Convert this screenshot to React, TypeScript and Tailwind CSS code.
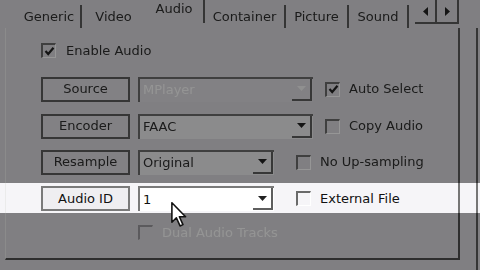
import React from 'react';

const tabs = [
  { label: 'Generic', cls: 'w-[64px] border-r-2 border-[#5a5a5a]' },
  { label: 'Video', cls: 'w-[63px]' },
  { label: 'Audio', cls: 'w-[60px] border-r-2 border-[#5a5a5a] self-stretch pb-[5px]' },
  { label: 'Container', cls: 'w-[81px] border-r-2 border-[#5a5a5a]' },
  { label: 'Picture', cls: 'w-[63px] border-r-2 border-[#5a5a5a]' },
  { label: 'Sound', cls: 'w-[60px] border-r-2 border-[#5a5a5a]' },
];

const Check = ({ checked, disabled }: { checked?: boolean; disabled?: boolean }) => (
  <div
    className={`w-[15px] h-[15px] shrink-0 border-t-2 border-l-2 border-b border-r flex items-center justify-center ${
      disabled
        ? 'border-t-[#9a999d] border-l-[#9a999d] border-b-[#d9d8dc] border-r-[#d9d8dc]'
        : 'border-t-[#6a6a6a] border-l-[#6a6a6a] border-b-white border-r-white'
    }`}
  >
    {checked && (
      <svg width="11" height="11" viewBox="0 0 11 11">
        <path d="M1.5 5 L4.2 8 L9.5 1.8" fill="none" stroke="#222" strokeWidth="2.2" />
      </svg>
    )}
  </div>
);

const Btn = ({ label, lit }: { label: string; lit?: boolean }) => (
  <div
    className={`w-[89px] h-[25px] shrink-0 border-2 flex items-center justify-center text-[13px] ${
      lit ? 'border-[#7a7a7a] bg-[#efeef1] text-[#111]' : 'border-[#5c5c5c] bg-[#dcdbdf] text-[#2e2e2e]'
    }`}
  >
    {label}
  </div>
);

const Combo = ({ value, wide, disabled, lit }: { value: string; wide?: boolean; disabled?: boolean; lit?: boolean }) => (
  <div
    className={`${wide ? 'w-[175px]' : 'w-[136px]'} h-[25px] ml-[8px] shrink-0 flex border-t-2 border-l-2 ${
      lit ? 'border-[#7a7a7a] bg-white' : disabled ? 'border-[#6a6a6a] bg-[#dcdbdf]' : 'border-[#6a6a6a] bg-[#ececee]'
    }`}
  >
    <div
      className={`flex-1 flex items-center pl-[3px] text-[13px] ${
        disabled ? 'text-[#fbfbfb]' : lit ? 'text-[#111]' : 'text-[#2e2e2e]'
      }`}
    >
      {value}
    </div>
    <div className="w-[20px] flex items-center justify-center border-r-2 border-b-2 border-[#5e5e5e] mb-[1px] mr-[1px]">
      <svg width="9" height="5" viewBox="0 0 9 5">
        <path d="M0 0 H9 L4.5 5 Z" fill={disabled ? '#f4f4f4' : '#222'} />
      </svg>
    </div>
  </div>
);

const Option = ({ label, checked, far, lit }: { label: string; checked?: boolean; far?: boolean; lit?: boolean }) => (
  <div
    className={`flex items-center gap-[9px] ${far ? 'ml-[22px]' : 'ml-[12px]'} text-[13px] ${
      lit ? 'text-[#111]' : 'text-[#2e2e2e]'
    }`}
  >
    <Check checked={checked} />
    <span>{label}</span>
  </div>
);

// panel slice: left edge, content, right border of the tab page and the dialog edge
const Frame = ({ children, cls, line }: { children: React.ReactNode; cls: string; line: string }) => (
  <div className="flex flex-1">
    <div className={`ml-[5px] w-[455px] border-r-2 border-l pl-[35px] border-l-[#ebebeb] ${line} ${cls}`}>{children}</div>
    <div className={`ml-[16px] border-l-2 ${line}`} />
  </div>
);

export default function App() {
  return (
    <div className="w-[480px] h-[270px] overflow-hidden flex flex-col font-['DejaVu_Sans',sans-serif] select-none">
      {/* dimmed top part */}
      <div className="h-[183px] flex flex-col bg-[#d9d8dc] brightness-[.59]">
        <div className="h-[28px] flex items-end pl-[18px]">
          {tabs.map(t => (
            <div key={t.label} className={`h-[23px] flex items-center justify-center text-[13px] text-[#2e2e2e] ${t.cls}`}>
              {t.label}
            </div>
          ))}
          <div className="ml-[6px] mb-[4px] flex border-b-2 border-[#5a5a5a] h-[24px]">
            <div className="w-[22px] flex items-center justify-center border-r-2 border-[#5a5a5a]">
              <svg width="5" height="9" viewBox="0 0 5 9"><path d="M5 0 V9 L0 4.5 Z" fill="#222" /></svg>
            </div>
            <div className="w-[22px] flex items-center justify-center border-r-2 border-[#5a5a5a]">
              <svg width="5" height="9" viewBox="0 0 5 9"><path d="M0 0 V9 L5 4.5 Z" fill="#222" /></svg>
            </div>
          </div>
        </div>

        <Frame cls="" line="border-[#5a5a5a]">
          <div className="mt-[13px] flex items-center gap-[10px] text-[13px] text-[#2e2e2e]">
            <Check checked />
            <span>Enable Audio</span>
          </div>
          <div className="mt-[16px] flex items-center">
            <Btn label="Source" />
            <Combo value="MPlayer" wide disabled />
            <Option label="Auto Select" checked />
          </div>
          <div className="mt-[12px] flex items-center">
            <Btn label="Encoder" />
            <Combo value="FAAC" wide />
            <Option label="Copy Audio" />
          </div>
          <div className="mt-[11px] flex items-center">
            <Btn label="Resample" />
            <Combo value="Original" />
            <Option label="No Up-sampling" far />
          </div>
        </Frame>
      </div>

      {/* highlighted row */}
      <div className="h-[30px] flex bg-[#f6f5f8]">
        <Frame cls="pt-[3px]" line="border-[#767676]">
          <div className="flex items-center">
            <Btn label="Audio ID" lit />
            <Combo value="1" lit />
            <Option label="External File" far lit />
          </div>
        </Frame>
      </div>

      {/* dimmed bottom part */}
      <div className="h-[57px] flex bg-[#d9d8dc] brightness-[.59]">
        <div className="flex flex-1 items-start">
          <div className="ml-[5px] w-[455px] h-[47px] border-r-2 border-b-2 border-[#4e4e4e] border-l border-l-[#ebebeb] pl-[132px] pt-[10px]">
            <div className="flex items-center gap-[9px] text-[13px] text-[#fbfbfb]">
              <Check disabled />
              <span>Dual Audio Tracks</span>
            </div>
          </div>
          <div className="ml-[16px] self-stretch border-l-2 border-[#5a5a5a]" />
        </div>
      </div>

      {/* mouse pointer */}
      <svg className="absolute left-[171px] top-[202px]" width="16" height="25" viewBox="0 0 12 19">
        <path d="M0.6 0.6 V15.4 L4 12 L6.8 18.2 L9 17.2 L6.3 11.2 H11 Z" fill="#fff" stroke="#111" strokeWidth="1.2" strokeLinejoin="round" />
      </svg>
    </div>
  );
}
